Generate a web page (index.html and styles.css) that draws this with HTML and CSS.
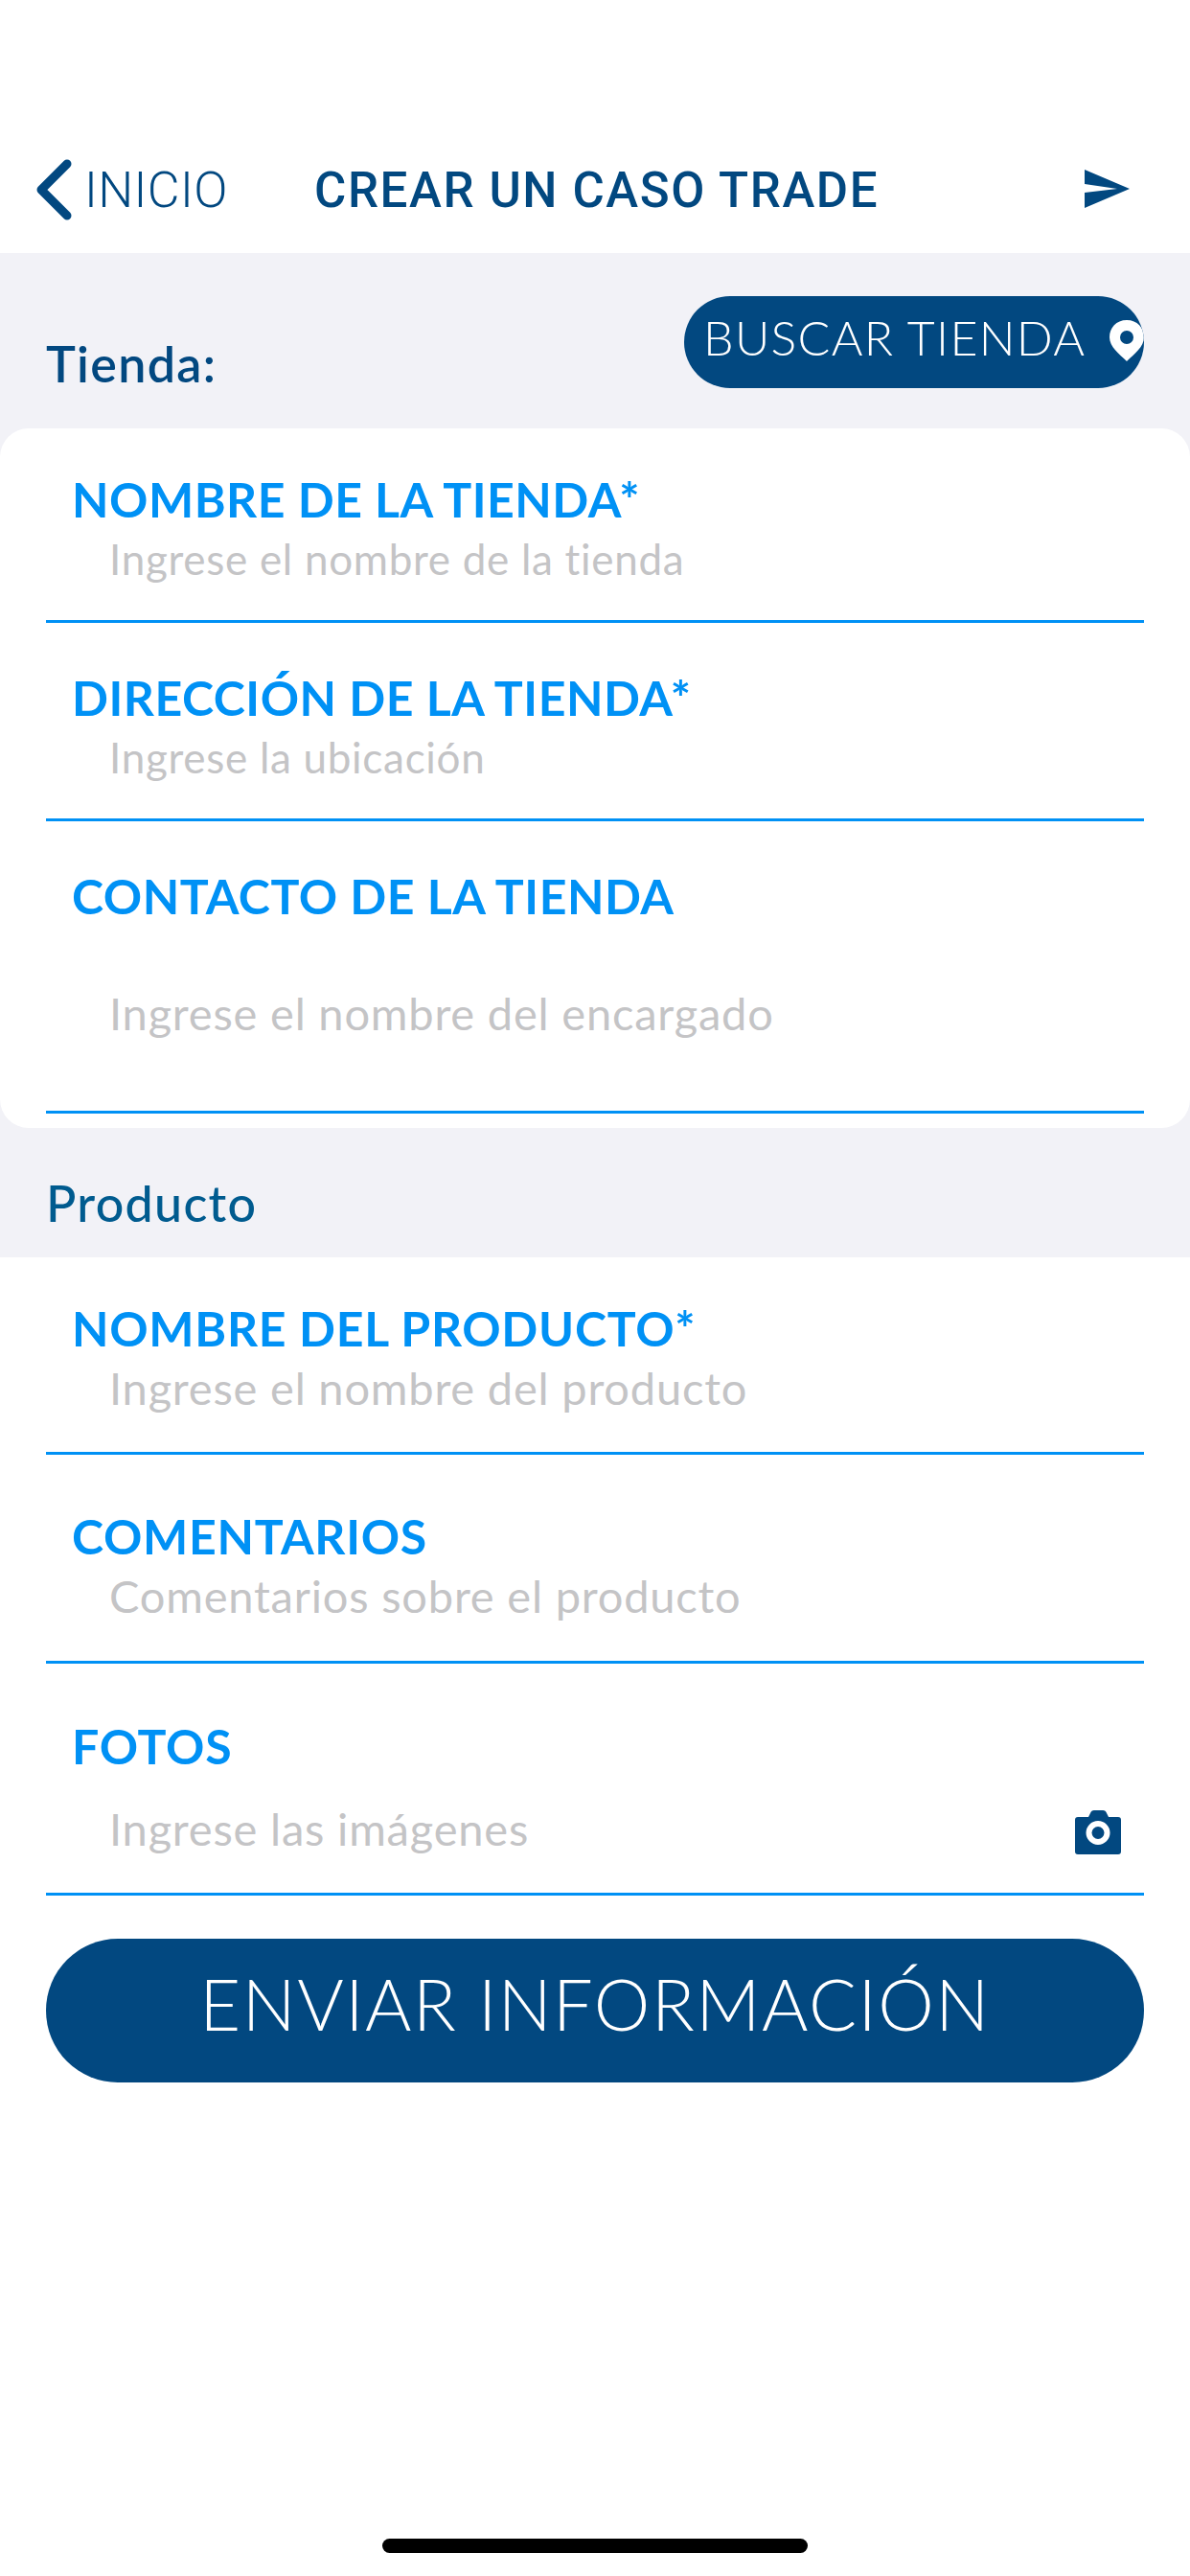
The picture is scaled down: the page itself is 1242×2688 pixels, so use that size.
FILE: index.html
```html
<!DOCTYPE html>
<html lang="es">
<head>
<meta charset="utf-8">
<title>Crear un caso trade</title>
<link rel="stylesheet" href="styles.css">
</head>
<body>
<div class="page">
  <header class="topbar">
    <a class="back">
      <svg class="back-icon" width="40" height="66" viewBox="0 0 40 66"><path d="M34 6 L7 33 L34 60" fill="none" stroke="#024880" stroke-width="9" stroke-linecap="round" stroke-linejoin="round"/></svg>
      <span class="back-text">INICIO</span>
    </a>
    <h1 class="title">CREAR UN CASO TRADE</h1>
    <svg class="send" width="47" height="40" viewBox="0 0 47 40"><path d="M0 0 L47 20 L0 40 L0 24 L34 20 L0 15 Z" fill="#024880"/></svg>
  </header>

  <div class="store">
    <section class="store-head">
      <span class="section-title">Tienda:</span>
      <a class="search-btn">
        <span class="search-text">BUSCAR TIENDA</span>
        <svg class="pin" width="36" height="43" viewBox="0 0 36 43"><path fill-rule="evenodd" d="M18 0 C29 0 36 8 36 18 C36 28 26 35 18 43 C10 35 0 28 0 18 C0 8 7 0 18 0 Z M18 11 A7 7 0 1 0 18 25 A7 7 0 1 0 18 11 Z" fill="#fff"/></svg>
      </a>
    </section>

    <section class="card">
      <div class="field f1">
        <div class="label">NOMBRE DE LA TIENDA*</div>
        <div class="hint">Ingrese el nombre de la tienda</div>
      </div>
      <div class="field f2">
        <div class="label">DIRECCIÓN DE LA TIENDA*</div>
        <div class="hint">Ingrese la ubicación</div>
      </div>
      <div class="field f3">
        <div class="label">CONTACTO DE LA TIENDA</div>
        <div class="hint hint-lg hint-far">Ingrese el nombre del encargado</div>
      </div>
    </section>

    <section class="product-head">
      <span class="section-title product-title">Producto</span>
    </section>
  </div>

  <section class="product">
    <div class="field f4">
      <div class="label">NOMBRE DEL PRODUCTO*</div>
      <div class="hint hint-lg">Ingrese el nombre del producto</div>
    </div>
    <div class="field f5">
      <div class="label">COMENTARIOS</div>
      <div class="hint hint-lg">Comentarios sobre el producto</div>
    </div>
    <div class="field f6">
      <div class="label">FOTOS</div>
      <div class="hint-row">
        <div class="hint hint-lg hint-photo">Ingrese las imágenes</div>
        <svg class="camera" width="48" height="46" viewBox="0 0 48 46"><path fill-rule="evenodd" d="M14 7 L16 3 Q17 0 20 0 L29 0 Q32 0 33 3 L35 7 L45 7 Q48 7 48 10 L48 43 Q48 46 45 46 L3 46 Q0 46 0 43 L0 10 Q0 7 3 7 Z M24 11 A12.5 12.5 0 1 0 24 36 A12.5 12.5 0 1 0 24 11 Z" fill="#024880"/><circle cx="24" cy="23.500" r="6.500" fill="#024880"/></svg>
      </div>
    </div>
    <a class="submit">ENVIAR INFORMACIÓN</a>
  </section>

  <div class="home-bar"></div>
</div>
</body>
</html>
```
FILE: styles.css
```css
* { box-sizing: border-box; }
html, body { margin: 0; padding: 0; background: #fff; }
.page {
  width: 1242px;
  height: 2688px;
  display: flex;
  flex-direction: column;
  overflow: hidden;
  background: #fff;
  font-family: "Lato", "Liberation Sans", sans-serif;
}
.topbar {
  height: 264px;
  padding: 164px 63px 0 36px;
  display: flex;
  align-items: flex-start;
  background: #fff;
}
.back {
  width: 292px;
  display: flex;
  align-items: center;
  gap: 12px;
  color: #024880;
}
.back-icon { flex: none; }
.back-text {
  font-family: "Roboto", sans-serif;
  font-size: 52px;
  font-weight: 300;
  line-height: 66px;
  letter-spacing: 0.4px;
  margin-top: 2px;
}
.title {
  flex: 1;
  margin: 2px 0 0;
  font-family: "Roboto", sans-serif;
  font-size: 51px;
  font-weight: 500;
  line-height: 66px;
  letter-spacing: 1.6px;
  color: #024880;
}
.send { flex: none; margin-top: 13px; }
.store { background: #f2f2f7; }
.store-head {
  height: 183px;
  padding: 45px 48px 0;
  display: flex;
  justify-content: space-between;
  align-items: flex-start;
}
.section-title {
  margin-top: 40px;
  font-family: "Lato", sans-serif;
  font-size: 52px;
  font-weight: 600;
  line-height: 60px;
  letter-spacing: 1.3px;
  color: #024880;
}
.search-btn {
  width: 480px;
  height: 96px;
  padding-left: 20px;
  display: flex;
  align-items: center;
  overflow: hidden;
  border-radius: 48px;
  background: #024880;
  color: #fff;
  font-family: "Lato", sans-serif;
  font-size: 50px;
  font-weight: 300;
  letter-spacing: 1.3px;
  white-space: nowrap;
}
.search-text { margin-bottom: 10px; }
.pin { flex: none; margin: 0 0 3px auto; }
.card {
  height: 730px;
  border-radius: 30px;
  background: #fff;
}
.field {
  margin: 0 48px;
  padding-left: 27px;
  border-bottom: 3px solid #0091f5;
}
.label {
  font-family: "Lato", sans-serif;
  font-size: 50px;
  font-weight: 700;
  line-height: 50px;
  letter-spacing: 0.5px;
  color: #0091f5;
}
.hint {
  margin-left: 39px;
  margin-top: 12px;
  font-family: "Lato", sans-serif;
  font-size: 44px;
  font-weight: 400;
  line-height: 50px;
  letter-spacing: 0.7px;
  color: #c4c4c6;
}
.hint-lg {
  font-size: 47px;
  letter-spacing: 0.8px;
}
.f1 { height: 203px; padding-top: 49px; }
.f2 { height: 207px; padding-top: 53px; }
.f3 { height: 305px; padding-top: 53px; }
.hint-far { margin-top: 72px; }
.product-head {
  height: 135px;
  padding: 0 48px;
}
.product-title {
  display: block;
  margin-top: 0;
  padding-top: 48px;
  font-weight: 500;
  color: #005b8f;
}
.product { background: #fff; }
.product .label { letter-spacing: 0.7px; }
.f4 { height: 206px; padding-top: 49px; }
.f5 { height: 218px; padding-top: 60px; }
.f6 { height: 242px; padding-top: 61px; }
.hint-row {
  display: flex;
  justify-content: space-between;
  align-items: center;
  margin-top: 34px;
  padding-right: 24px;
}
.hint-photo { margin-top: 0; }
.camera { flex: none; margin-top: 8px; }
.submit {
  display: flex;
  align-items: center;
  justify-content: center;
  height: 150px;
  margin: 45px 48px 0;
  padding-bottom: 16px;
  border-radius: 75px;
  background: #024880;
  color: #fff;
  font-family: "Lato", sans-serif;
  font-size: 74px;
  font-weight: 300;
  letter-spacing: 1.5px;
  white-space: nowrap;
}
.home-bar {
  width: 444px;
  height: 15px;
  margin: auto auto 24px;
  border-radius: 8px;
  background: #000;
}
```
